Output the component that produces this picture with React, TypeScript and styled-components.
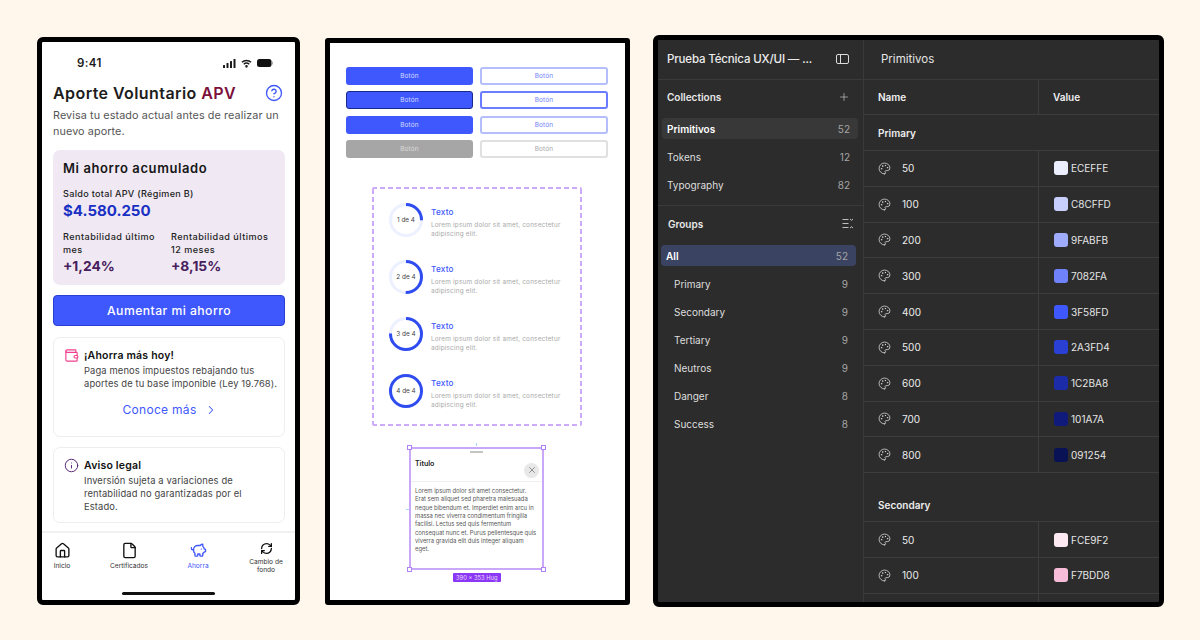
import React from "react";
import styled, { createGlobalStyle } from "styled-components";
import {
  ChevronRight,
  CircleHelp,
  File,
  House,
  Info,
  Palette,
  PiggyBank,
  Plus,
  RefreshCw,
  Wallet,
  X,
} from "lucide-react";

const GlobalStyle = createGlobalStyle`
  html, body {
    margin: 0;
    padding: 0;
    background: #fff7ec;
  }
  * {
    box-sizing: border-box;
  }
`;

const MONT = `"Inter", "Liberation Sans", sans-serif`;
const BLUE = "#3f58fd";

const Page = styled.div`
  display: flex;
  align-items: flex-start;
  width: 1200px;
  height: 640px;
  padding: 35px 0 0 37px;
  overflow: hidden;
  background: #fff7ec;
  font-family: ${MONT};
`;

/* phone */

const Phone = styled.section`
  display: flex;
  flex-direction: column;
  width: 263px;
  height: 568px;
  margin-top: 2px;
  border: 5px solid #000;
  border-radius: 6px;
  background: #fff;
  overflow: hidden;
`;

const StatusBar = styled.div`
  flex: none;
  display: flex;
  align-items: center;
  justify-content: space-between;
  height: 40px;
  padding: 2px 22px 0 35px;
  font-size: 11.5px;
  font-weight: 600;
  letter-spacing: 0.4px;
  color: #1b1b1b;
`;

const StatusIcons = styled.div`
  display: flex;
  align-items: center;
  gap: 5px;
`;

const PhoneBody = styled.div`
  display: flex;
  flex-direction: column;
  flex: none;
  padding: 0 10px 0 11px;
`;

const TitleRow = styled.div`
  display: flex;
  align-items: center;
  justify-content: space-between;
  height: 22px;
  padding-right: 2px;
  color: ${BLUE};
`;

const Title = styled.h1`
  margin: 0;
  font-size: 16px;
  font-weight: 600;
  letter-spacing: 0.42px;
  color: #1c1c1c;
  white-space: nowrap;
`;

const TitleAccent = styled.span`
  color: #7c0f3c;
`;

const Lead = styled.p`
  margin: 4px 0 10px;
  font-size: 10.8px;
  line-height: 16px;
  letter-spacing: 0.1px;
  color: #555;
  white-space: nowrap;
`;

const SavingsCard = styled.div`
  height: 135px;
  padding: 10px 10px 0;
  border-radius: 7px;
  background: #f0e9f3;
`;

const SavingsTitle = styled.h2`
  margin: 0 0 10px;
  font-size: 13px;
  line-height: 17px;
  font-weight: 600;
  letter-spacing: 0.6px;
  color: #161616;
`;

const SmallLabel = styled.div`
  font-size: 9.1px;
  line-height: 13px;
  font-weight: 500;
  letter-spacing: 0.3px;
  color: #222;
`;

const ReturnLabel = styled(SmallLabel)`
  letter-spacing: 0.47px;
  white-space: nowrap;
`;

const Balance = styled.div`
  font-size: 15px;
  line-height: 21px;
  font-weight: 700;
  color: #1a30c4;
`;

const ReturnsGrid = styled.div`
  display: grid;
  grid-template-columns: 108px 1fr;
  margin-top: 9px;
`;

const ReturnValue = styled.div`
  font-size: 13.8px;
  line-height: 20px;
  font-weight: 700;
  color: #47205c;
`;

const PrimaryAction = styled.button`
  display: block;
  width: 100%;
  height: 31px;
  margin: 10px 0 11px;
  border: 1px solid #2a3fd4;
  border-radius: 4px;
  background: ${BLUE};
  color: #fff;
  font-family: ${MONT};
  font-size: 12.2px;
  font-weight: 450;
  letter-spacing: 0.45px;
`;

const InfoCard = styled.div<{ $height: number }>`
  height: ${(p) => p.$height}px;
  margin-bottom: 10px;
  padding: 9px 8px 0 10px;
  border: 1px solid #eeeeee;
  border-radius: 7px;
  &:last-child {
    margin-bottom: 8px;
  }
`;

const InfoHead = styled.div`
  display: flex;
  align-items: center;
  gap: 5px;
  height: 16px;
  color: #5a2a7a;
`;

const InfoTitle = styled.h3`
  margin: 0;
  font-size: 10.5px;
  font-weight: 600;
  letter-spacing: 0.2px;
  color: #111;
`;

const InfoText = styled.p`
  margin: 1px 0 0 20px;
  font-size: 9.4px;
  line-height: 13px;
  letter-spacing: 0.12px;
  color: #444;
  white-space: nowrap;
`;

const MoreLink = styled.a`
  display: flex;
  align-items: center;
  justify-content: center;
  gap: 7px;
  margin-top: 12px;
  font-size: 12px;
  letter-spacing: 0.3px;
  color: ${BLUE};
`;

const BottomNav = styled.nav`
  flex: none;
  display: flex;
  gap: 9px;
  height: 61px;
  margin-top: auto;
  border-top: 2px solid #f1f1f1;
  padding-top: 9px;
`;

const NavItem = styled.div<{ $active?: boolean; $width: number }>`
  display: flex;
  flex-direction: column;
  align-items: center;
  width: ${(p) => p.$width}px;
  color: ${(p) => (p.$active ? BLUE : "#111")};
  &:first-child {
    margin-right: 8px;
  }
`;

const NavLabel = styled.span<{ $active?: boolean }>`
  margin-top: 3px;
  font-size: 6.6px;
  line-height: 8px;
  font-weight: 400;
  text-align: center;
  color: ${(p) => (p.$active ? BLUE : "#333")};
`;

const HomeBar = styled.div`
  flex: none;
  align-self: center;
  width: 93px;
  height: 3px;
  margin: 0 0 5px;
  border-radius: 2px;
  background: #111;
`;

/* components sheet */

const Sheet = styled.section`
  display: flex;
  flex-direction: column;
  width: 305px;
  height: 567px;
  margin: 3px 0 0 25px;
  border: 5px solid #000;
  border-radius: 3px;
  background: #fff;
  padding: 24px 17px 0 16px;
`;

const ButtonGrid = styled.div`
  display: grid;
  grid-template-columns: 127px 128px;
  grid-auto-rows: 18px;
  column-gap: 7px;
  row-gap: 6.3px;
`;

const DemoButton = styled.div<{ $kind: string; $state: string }>`
  display: flex;
  align-items: center;
  justify-content: center;
  border-radius: 3px;
  font-size: 6.4px;
  letter-spacing: 0.2px;
  border: 2px solid transparent;
  ${(p) =>
    p.$kind === "solid"
      ? `
    background: ${p.$state === "off" ? "#a6a6a6" : BLUE};
    color: ${p.$state === "off" ? "#dcdcdc" : "#d6dcff"};
    border-width: 1px;
    border-color: ${p.$state === "focus" ? "#1a2a88" : "transparent"};
  `
      : `
    background: #fff;
    color: ${p.$state === "off" ? "#a8a8a8" : "#7082fa"};
    border-color: ${p.$state === "off" ? "#e0e0e0" : p.$state === "focus" ? "#6a7efd" : "#b4befc"};
  `}
`;

const DASH = "#cdabfa";

const StepsFrame = styled.div`
  display: flex;
  flex-direction: column;
  gap: 23px;
  width: 210px;
  height: 239px;
  margin: 29.5px 0 0 26px;
  padding: 16px 0 0 17px;
  border-radius: 2px;
  background-image:
    repeating-linear-gradient(90deg, ${DASH} 0 5px, transparent 5px 8px),
    repeating-linear-gradient(90deg, ${DASH} 0 5px, transparent 5px 8px),
    repeating-linear-gradient(0deg, ${DASH} 0 5px, transparent 5px 8px),
    repeating-linear-gradient(0deg, ${DASH} 0 5px, transparent 5px 8px);
  background-size: 100% 2px, 100% 2px, 2px 100%, 2px 100%;
  background-position: 0 0, 0 100%, 0 0, 100% 0;
  background-repeat: no-repeat;
`;

const Step = styled.div`
  display: flex;
  gap: 8px;
  height: 34px;
`;

const RingBox = styled.div`
  position: relative;
  flex: none;
  width: 34px;
  height: 34px;
`;

const RingLabel = styled.span`
  position: absolute;
  inset: 0;
  display: flex;
  align-items: center;
  justify-content: center;
  font-size: 6.4px;
  color: #444;
`;

const StepTitle = styled.div`
  margin-top: 4px;
  font-size: 8.2px;
  line-height: 11px;
  font-weight: 500;
  letter-spacing: 0.2px;
  color: ${BLUE};
`;

const StepText = styled.div`
  margin-top: 3px;
  font-size: 6.4px;
  line-height: 8.5px;
  letter-spacing: 0.2px;
  color: #a9a9a9;
  white-space: nowrap;
`;

const Modal = styled.div`
  position: relative;
  width: 135px;
  height: 123px;
  margin: 21px 0 0 63px;
  border: 2px solid #c9a8fa;
`;

const Grip = styled.div`
  width: 13px;
  height: 1.5px;
  margin: 2px auto 0;
  background: #c4c4c4;
`;

const ModalHead = styled.div`
  display: flex;
  justify-content: space-between;
  height: 29px;
  padding: 6px 3px 0 4px;
  border-bottom: 1px solid #f0f0f0;
`;

const ModalTitle = styled.span`
  font-size: 7px;
  line-height: 9px;
  font-weight: 600;
  color: #222;
`;

const CloseDot = styled.span`
  display: flex;
  align-items: center;
  justify-content: center;
  width: 15px;
  height: 15px;
  margin-top: 4px;
  border-radius: 50%;
  background: #e8e8e8;
  color: #444;
`;

const ModalText = styled.div`
  padding: 5px 0 0 4px;
  font-size: 5.86px;
  line-height: 8.33px;
  color: #555;
  white-space: nowrap;
`;

const Handle = styled.span<{ $x: "left" | "right"; $y: "top" | "bottom" }>`
  position: absolute;
  ${(p) => p.$x}: -4px;
  ${(p) => p.$y}: -4px;
  width: 5px;
  height: 5px;
  border: 1px solid #b182f7;
  background: #fff;
`;

const SizeTag = styled.span`
  position: absolute;
  left: 42px;
  bottom: -14px;
  padding: 0 3px;
  height: 9px;
  border-radius: 1px;
  background: #8a38f5;
  color: #eadcff;
  font-size: 5.8px;
  line-height: 9px;
  white-space: nowrap;
`;

const GuideTick = styled.span<{ $side: "top" | "left" }>`
  position: absolute;
  background: #a8d4fa;
  ${(p) =>
    p.$side === "top"
      ? "top: -6px; left: 65px; width: 1px; height: 3px;"
      : "top: 60px; left: -5px; width: 3px; height: 1px;"}
`;

/* variables panel */

const Panel = styled.section`
  display: flex;
  width: 511px;
  height: 572px;
  margin-left: 23px;
  border: 5px solid #000;
  border-radius: 6px;
  background: #2c2c2c;
  color: #f0f0f0;
  font-family: "Inter", "Liberation Sans", sans-serif;
  overflow: hidden;
`;

const Sidebar = styled.aside`
  flex: none;
  width: 206px;
  border-right: 1px solid #3a3a3a;
`;

const SideHeader = styled.div`
  display: flex;
  align-items: center;
  justify-content: space-between;
  height: 40px;
  padding: 0 14px 2px 9px;
  border-bottom: 1px solid #3a3a3a;
  font-size: 11.5px;
  font-weight: 500;
  letter-spacing: -0.15px;
  white-space: nowrap;
  color: #ededed;
`;

const SideSection = styled.div<{ $pad: string; $height: number }>`
  display: flex;
  align-items: center;
  justify-content: space-between;
  height: ${(p) => p.$height}px;
  padding: ${(p) => p.$pad};
  font-size: 10px;
  font-weight: 600;
  color: #e8e8e8;
`;

const SideList = styled.div`
  display: flex;
  flex-direction: column;
  gap: 7px;
  padding: 4px 5px 0 4px;
`;

const GroupList = styled(SideList)`
  padding: 4px 7px 0 3px;
`;

const SideRow = styled.div<{ $bg?: string; $indent?: boolean; $strong?: boolean }>`
  display: flex;
  align-items: center;
  justify-content: space-between;
  height: 21px;
  padding: 0 8px 0 ${(p) => (p.$indent ? 13 : 5)}px;
  border-radius: 4px;
  background: ${(p) => p.$bg || "transparent"};
  font-size: 10px;
  font-weight: ${(p) => (p.$strong ? 600 : 400)};
  color: ${(p) => (p.$strong ? "#fff" : "#dedede")};
`;

const Count = styled.span`
  font-weight: 400;
  color: #a5a5a5;
`;

const SideDivider = styled.div`
  height: 1px;
  margin-top: 10px;
  background: #3a3a3a;
`;

const TableArea = styled.div`
  flex: 1;
  min-width: 0;
`;

const TableTop = styled.div`
  display: flex;
  align-items: center;
  height: 40px;
  padding: 0 0 2px 17px;
  border-bottom: 1px solid #3a3a3a;
  font-size: 11.5px;
  font-weight: 400;
  color: #e6e6e6;
`;

const Row = styled.div<{ $height: number; $head?: boolean }>`
  display: grid;
  grid-template-columns: 174px 1fr;
  height: ${(p) => p.$height}px;
  border-bottom: 1px solid #3d3d3d;
  font-size: 10px;
  font-weight: ${(p) => (p.$head ? 600 : 400)};
`;

const Cell = styled.div<{ $pad: number }>`
  display: flex;
  align-items: center;
  padding-left: ${(p) => p.$pad}px;
  & + & {
    border-left: 1.5px solid #3d3d3d;
  }
`;

const GroupRow = styled.div<{ $height: number; $top: number }>`
  display: flex;
  align-items: center;
  height: ${(p) => p.$height}px;
  padding: ${(p) => p.$top}px 0 0 14px;
  border-bottom: 1px solid #3d3d3d;
  font-size: 10px;
  font-weight: 600;
  color: #ececec;
`;

const VarName = styled.span`
  margin-left: 11px;
  color: #ececec;
`;

const Swatch = styled.span<{ $color: string }>`
  flex: none;
  width: 14px;
  height: 14px;
  margin-right: 3px;
  border-radius: 3px;
  background: ${(p) => p.$color};
`;

const Code = styled.span`
  font-size: 10px;
  color: #e6e6e6;
`;

const SignalIcon = () => (
  <svg width="13" height="9" viewBox="0 0 13 9" fill="#1b1b1b">
    <rect x="0" y="6" width="2" height="3" rx="0.5" />
    <rect x="3.5" y="4" width="2" height="5" rx="0.5" />
    <rect x="7" y="2" width="2" height="7" rx="0.5" />
    <rect x="10.5" y="0" width="2" height="9" rx="0.5" />
  </svg>
);

const WifiIcon = () => (
  <svg width="11" height="9" viewBox="0 0 12 9" fill="none" stroke="#1b1b1b" strokeWidth="1.6">
    <path d="M1 3.2c2.8-2.6 7.2-2.6 10 0" />
    <path d="M3 5.3c1.7-1.5 4.3-1.5 6 0" />
    <circle cx="6" cy="7.6" r="0.6" fill="#1b1b1b" />
  </svg>
);

const BatteryIcon = () => (
  <svg width="16" height="8" viewBox="0 0 16 8">
    <rect x="0" y="0" width="14.5" height="8" rx="2.5" fill="#111" />
    <rect x="15" y="2.5" width="1" height="3" rx="0.5" fill="#aaa" />
  </svg>
);

const SidebarToggleIcon = () => (
  <svg width="13" height="10" viewBox="0 0 13 10" fill="none" stroke="#dcdcdc" strokeWidth="1">
    <rect x="0.5" y="0.5" width="12" height="9" rx="1.5" />
    <path d="M4.5 0.5v9" />
  </svg>
);

const GroupsIcon = () => (
  <svg width="12" height="11" viewBox="0 0 12 11" fill="none" stroke="#cfcfcf" strokeWidth="0.9">
    <path d="M0.5 1.5h6M0.5 5.5h6M0.5 9.5h6" />
    <path d="M8 1l1.5 1.3L11 1M8 10l1.5-1.3L11 10" />
  </svg>
);

const Ring = ({ step }: { step: number }) => {
  const r = 15.5;
  const full = 2 * Math.PI * r;
  return (
    <RingBox>
      <svg width="34" height="34" viewBox="0 0 34 34">
        <circle cx="17" cy="17" r={r} fill="none" stroke="#edf0ff" strokeWidth="3" />
        <circle
          cx="17"
          cy="17"
          r={r}
          fill="none"
          stroke="#2f4cf0"
          strokeWidth="3"
          strokeDasharray={`${(full * step) / 4} ${full}`}
          transform="rotate(-90 17 17)"
        />
      </svg>
      <RingLabel>{step} de 4</RingLabel>
    </RingBox>
  );
};

const STATES = ["normal", "focus", "normal", "off"];

const PRIMARY = [
  ["50", "#ECEFFE", "ECEFFE"],
  ["100", "#C8CFFD", "C8CFFD"],
  ["200", "#9FABFB", "9FABFB"],
  ["300", "#7082FA", "7082FA"],
  ["400", "#3F58FD", "3F58FD"],
  ["500", "#2A3FD4", "2A3FD4"],
  ["600", "#1C2BA8", "1C2BA8"],
  ["700", "#101A7A", "101A7A"],
  ["800", "#091254", "091254"],
];

const SECONDARY = [
  ["50", "#FCE9F2", "FCE9F2"],
  ["100", "#F7BDD8", "F7BDD8"],
];

const VarRow = ({ name, color, code }: { name: string; color: string; code: string }) => (
  <Row $height={35.8}>
    <Cell $pad={14}>
      <Palette size={13} strokeWidth={1.4} color="#e0e0e0" />
      <VarName>{name}</VarName>
    </Cell>
    <Cell $pad={15}>
      <Swatch $color={color} />
      <Code>{code}</Code>
    </Cell>
  </Row>
);

export default function App() {
  return (
    <Page>
      <GlobalStyle />

      <Phone>
        <StatusBar>
          <span>9:41</span>
          <StatusIcons>
            <SignalIcon />
            <WifiIcon />
            <BatteryIcon />
          </StatusIcons>
        </StatusBar>
        <PhoneBody>
          <TitleRow>
            <Title>
              Aporte Voluntario <TitleAccent>APV</TitleAccent>
            </Title>
            <CircleHelp size={18} strokeWidth={1.8} />
          </TitleRow>
          <Lead>
            Revisa tu estado actual antes de realizar un
            <br />
            nuevo aporte.
          </Lead>
          <SavingsCard>
            <SavingsTitle>Mi ahorro acumulado</SavingsTitle>
            <SmallLabel>Saldo total APV (Régimen B)</SmallLabel>
            <Balance>$4.580.250</Balance>
            <ReturnsGrid>
              <div>
                <ReturnLabel>
                  Rentabilidad último
                  <br />
                  mes
                </ReturnLabel>
                <ReturnValue>+1,24%</ReturnValue>
              </div>
              <div>
                <ReturnLabel>
                  Rentabilidad últimos
                  <br />
                  12 meses
                </ReturnLabel>
                <ReturnValue>+8,15%</ReturnValue>
              </div>
            </ReturnsGrid>
          </SavingsCard>
          <PrimaryAction>Aumentar mi ahorro</PrimaryAction>
          <InfoCard $height={100}>
            <InfoHead>
              <Wallet size={15} strokeWidth={1.8} color="#f0408f" />
              <InfoTitle>¡Ahorra más hoy!</InfoTitle>
            </InfoHead>
            <InfoText>
              Paga menos impuestos rebajando tus
              <br />
              aportes de tu base imponible (Ley 19.768).
            </InfoText>
            <MoreLink>
              Conoce más <ChevronRight size={14} strokeWidth={1.8} />
            </MoreLink>
          </InfoCard>
          <InfoCard $height={76}>
            <InfoHead>
              <Info size={15} strokeWidth={1.6} />
              <InfoTitle>Aviso legal</InfoTitle>
            </InfoHead>
            <InfoText>
              Inversión sujeta a variaciones de
              <br />
              rentabilidad no garantizadas por el
              <br />
              Estado.
            </InfoText>
          </InfoCard>
        </PhoneBody>
        <BottomNav>
          <NavItem $width={40}>
            <House size={17} strokeWidth={1.9} />
            <NavLabel>Inicio</NavLabel>
          </NavItem>
          <NavItem $width={60}>
            <File size={17} strokeWidth={1.9} />
            <NavLabel>Certificados</NavLabel>
          </NavItem>
          <NavItem $active $width={60}>
            <PiggyBank size={17} strokeWidth={1.9} />
            <NavLabel $active>Ahorra</NavLabel>
          </NavItem>
          <NavItem $width={58}>
            <RefreshCw size={13} strokeWidth={2.4} />
            <NavLabel>
              Cambio de
              <br />
              fondo
            </NavLabel>
          </NavItem>
        </BottomNav>
        <HomeBar />
      </Phone>

      <Sheet>
        <ButtonGrid>
          {STATES.map((s, i) => (
            <React.Fragment key={i}>
              <DemoButton $kind="solid" $state={s}>
                Botón
              </DemoButton>
              <DemoButton $kind="outline" $state={s}>
                Botón
              </DemoButton>
            </React.Fragment>
          ))}
        </ButtonGrid>
        <StepsFrame>
          {[1, 2, 3, 4].map((n) => (
            <Step key={n}>
              <Ring step={n} />
              <div>
                <StepTitle>Texto</StepTitle>
                <StepText>
                  Lorem ipsum dolor sit amet, consectetur
                  <br />
                  adipiscing elit.
                </StepText>
              </div>
            </Step>
          ))}
        </StepsFrame>
        <Modal>
          <Handle $x="left" $y="top" />
          <Handle $x="right" $y="top" />
          <Handle $x="left" $y="bottom" />
          <Handle $x="right" $y="bottom" />
          <GuideTick $side="top" />
          <GuideTick $side="left" />
          <Grip />
          <ModalHead>
            <ModalTitle>Titulo</ModalTitle>
            <CloseDot>
              <X size={10} strokeWidth={1.3} />
            </CloseDot>
          </ModalHead>
          <ModalText>
            Lorem ipsum dolor sit amet consectetur.
            <br />
            Erat sem aliquet sed pharetra malesuada
            <br />
            neque bibendum et. Imperdiet enim arcu in
            <br />
            massa nec viverra condimentum fringilla
            <br />
            facilisi. Lectus sed quis fermentum
            <br />
            consequat nunc et. Purus pellentesque quis
            <br />
            viverra gravida elit duis integer aliquam
            <br />
            eget.
          </ModalText>
          <SizeTag>390 × 353 Hug</SizeTag>
        </Modal>
      </Sheet>

      <Panel>
        <Sidebar>
          <SideHeader>
            <span>Prueba Técnica UX/UI — ...</span>
            <SidebarToggleIcon />
          </SideHeader>
          <SideSection $pad="0 13px 0 9px" $height={34}>
            Collections
            <Plus size={12} strokeWidth={1.2} color="#d8d8d8" />
          </SideSection>
          <SideList>
            <SideRow $bg="#383838" $strong>
              Primitivos <Count>52</Count>
            </SideRow>
            <SideRow>
              Tokens <Count>12</Count>
            </SideRow>
            <SideRow>
              Typography <Count>82</Count>
            </SideRow>
          </SideList>
          <SideDivider />
          <SideSection $pad="0 9px 0 10px" $height={35}>
            Groups
            <GroupsIcon />
          </SideSection>
          <GroupList>
            <SideRow $bg="#3a4361" $strong>
              All <Count>52</Count>
            </SideRow>
            <SideRow $indent>
              Primary <Count>9</Count>
            </SideRow>
            <SideRow $indent>
              Secondary <Count>9</Count>
            </SideRow>
            <SideRow $indent>
              Tertiary <Count>9</Count>
            </SideRow>
            <SideRow $indent>
              Neutros <Count>9</Count>
            </SideRow>
            <SideRow $indent>
              Danger <Count>8</Count>
            </SideRow>
            <SideRow $indent>
              Success <Count>8</Count>
            </SideRow>
          </GroupList>
        </Sidebar>
        <TableArea>
          <TableTop>Primitivos</TableTop>
          <Row $height={35} $head>
            <Cell $pad={14}>Name</Cell>
            <Cell $pad={14}>Value</Cell>
          </Row>
          <GroupRow $height={36} $top={0}>
            Primary
          </GroupRow>
          {PRIMARY.map(([name, color, code]) => (
            <VarRow key={name} name={name} color={color} code={code} />
          ))}
          <GroupRow $height={49} $top={16}>
            Secondary
          </GroupRow>
          {SECONDARY.map(([name, color, code]) => (
            <VarRow key={name} name={name} color={color} code={code} />
          ))}
          <Row $height={35.8}>
            <Cell $pad={14} />
            <Cell $pad={15} />
          </Row>
        </TableArea>
      </Panel>
    </Page>
  );
}
